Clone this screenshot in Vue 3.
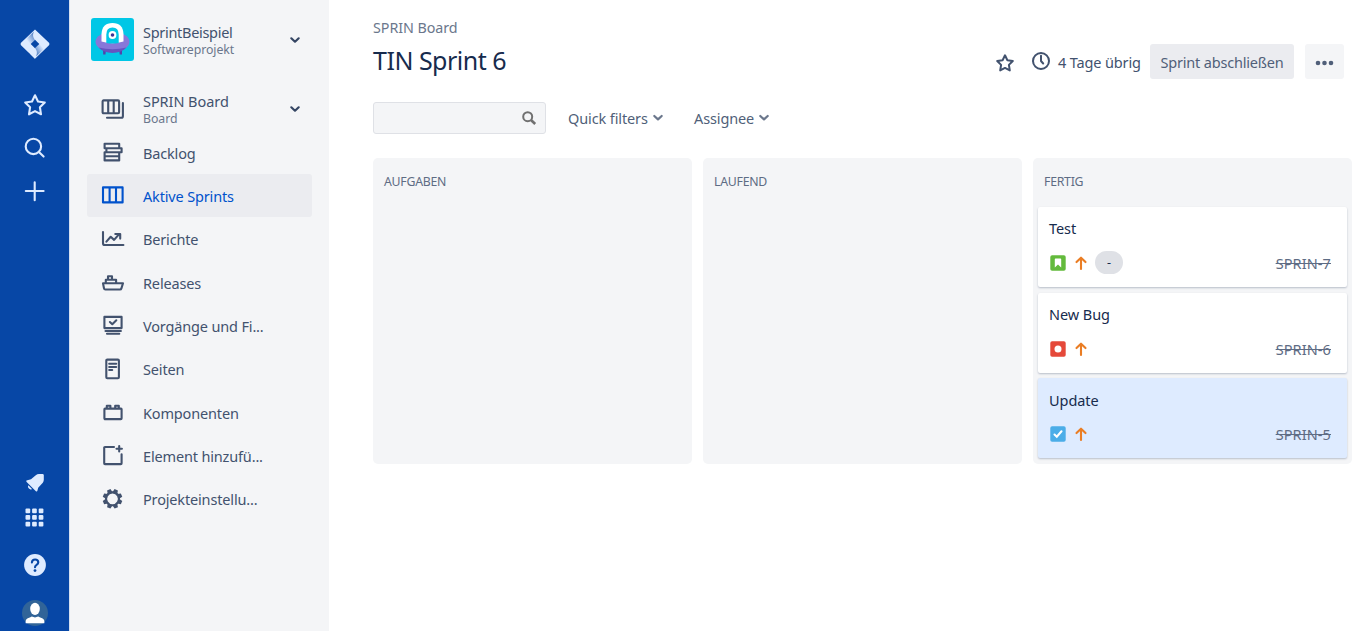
<script setup>
const navItems = [
  { label: 'Backlog', d: 'M4.6 4.8h14.6v4.5H4.6zM6.4 9.3h15.2v4H6.4zM4.6 13.3h14.6v8.1H4.6zM4.6 17.3h14.6' },
  { label: 'Aktive Sprints', active: true, d: 'M3 5.4h19.6v15H3zM9.6 5.4v15M16 5.4v15' },
  { label: 'Berichte', d: 'M3 6v11.2q0 1.8 1.8 1.8H23.4M6.4 15.6l4.3-4.8 3.4 3.1 4.6-5.3M15.3 8h4.9v4.6' },
  { label: 'Releases', d: 'M3 14.2h20l-1.6 5.2q-.3 1.1-1.5 1.1H5.4q-1.2 0-1.4-1.1zM5.8 14v-3.2h10.3V14M8 10.4V7.2h4v3.2' },
  { label: 'Vorgänge und Fi...', d: 'M4.4 4.9h17.2v11.2H4.4zM9.9 10l2.4 2.2 4-3.9M5.5 19h15.4M7 21.8h12.3' },
  { label: 'Seiten', d: 'M7.3 3.6h10.6q1 0 1 1v16.6q0 1-1 1H7.3q-1 0-1-1V4.6q0-1 1-1zM9.2 7.8h7M9.2 11h7M9.2 14h3' },
  { label: 'Komponenten', d: 'M5 9.6h16q.6 0 .6.6v9.1q0 .8-.8.8H5.2q-.8 0-.8-.8v-9.1q0-.6.6-.6zM6.8 9V6.7h3.6V9M15.2 9V6.7h3.6V9' },
  { label: 'Element hinzufü...', d: 'M14 5H5q-.8 0-.8.8v15.5q0 .8.8.8h15.8q.8 0 .8-.8v-9M19.2 4v5.4M16.5 6.7h5.4' },
  { label: 'Projekteinstellu...', gear: true, d: 'M12.5 6.4a6.4 6.4 0 1 0 .01 0z' },
]

const cards = [
  { title: 'Test', key: 'SPRIN-7', type: 'story', estimate: '-' },
  { title: 'New Bug', key: 'SPRIN-6', type: 'bug' },
  { title: 'Update', key: 'SPRIN-5', type: 'task', selected: true },
]

const columns = [
  { name: 'AUFGABEN', cards: [] },
  { name: 'LAUFEND', cards: [] },
  { name: 'FERTIG', cards },
]

const teeth = [22.5, 67.5, 112.5, 157.5, 202.5, 247.5, 292.5, 337.5]
const dots = [0, 1, 2, 3, 4, 5, 6, 7, 8]
</script>

<template>
  <div class="app">
    <nav class="rail">
      <div class="rail-item logo">
        <svg width="30" height="30" viewBox="0 0 30 30">
          <defs>
            <linearGradient id="shade-top" x1="1" y1="0" x2="0" y2="1"><stop offset=".2" stop-color="#0747a6" stop-opacity=".6" /><stop offset=".8" stop-color="#0747a6" stop-opacity="0" /></linearGradient>
            <linearGradient id="shade-bottom" x1="0" y1="1" x2="1" y2="0"><stop offset=".2" stop-color="#0747a6" stop-opacity=".6" /><stop offset=".8" stop-color="#0747a6" stop-opacity="0" /></linearGradient>
          </defs>
          <path d="M15 .5 29 13.8q1 1.2 0 2.4L15 29.7l-4.5-4.5L15 19.3 19.3 15 15 10.7z" fill="#deebff" />
          <path d="M15 .5v10.2L10.7 15l4.3 4.3v10.4L1 16.2q-1-1.2 0-2.4z" fill="#deebff" />
          <path d="M14.8 10.7Q11.8 7 14 2.5L6 10l4.7 5z" fill="url(#shade-top)" />
          <path d="M15.2 19.3q3 3.7.8 8.2l8-7.5-4.7-5z" fill="url(#shade-bottom)" />
        </svg>
      </div>
      <div class="rail-item">
        <svg class="line" width="26" height="26" viewBox="0 0 26 26"><path d="m13 3.3 3 6.2 6.8 1-4.9 4.7 1.1 7.1-6-3.2-6 3.2 1.1-7.1-4.9-4.7 6.8-1z" /></svg>
      </div>
      <div class="rail-item">
        <svg class="line" width="26" height="26" viewBox="0 0 26 26"><circle cx="11.4" cy="11.4" r="7.7" /><path d="m16.9 16.9 4.7 4.7" /></svg>
      </div>
      <div class="rail-item">
        <svg class="line" width="26" height="26" viewBox="0 0 26 26"><path d="M12.7 4.2v18M3.8 13h17.8" /></svg>
      </div>
      <div class="rail-bottom">
        <div class="rail-item short">
          <svg width="26" height="26" viewBox="0 0 26 26" fill="#deebff"><path d="M4.4 11.4q-.5 1.1.5 1.9l9 9q1.2.6 1.5-.6l.8-3 4.6-5q1-1.300 1-3V6.1q-.2-1-1.2-1h-3.600q-1.800 0-3.200 1.200L9 10.300z" /><path d="M6.300 16.300 10 19.900q-1.600 1.200-3.100-.3-1.600-1.600-.6-3.300z" /></svg>
        </div>
        <div class="rail-item short">
          <svg width="19" height="19" viewBox="0 0 19 19" fill="#deebff"><rect v-for="i in dots" :key="i" :x="0.5 + (i % 3) * 6.6" :y="0.5 + Math.floor(i / 3) * 6.6" width="4.7" height="4.7" rx="1" /></svg>
        </div>
        <div class="rail-item help">
          <svg width="22" height="22" viewBox="0 0 22 22"><circle cx="11" cy="11" r="10.9" fill="#deebff" /><path d="M7.900 8.500q.2-3 3.200-3t3.200 2.800q0 1.500-1.700 2.500-1.600.9-1.600 2.400" fill="none" stroke="#0747a6" stroke-width="2.1" stroke-linecap="round" /><circle cx="11" cy="16.6" r="1.4" fill="#0747a6" /></svg>
        </div>
        <div class="rail-item">
          <svg width="26" height="26" viewBox="0 0 26 26"><circle cx="13" cy="13" r="13" fill="#316498" /><ellipse cx="13" cy="8.9" rx="4.8" ry="6.2" fill="#fff" /><path d="M3.600 22.700q-.5-4.300 4.200-5.200l2-.9q3.200 1.600 6.400 0l2 .9q4.700.9 4.200 5.200 0 .6-.6.600H4.200q-.6 0-.6-.600z" fill="#fff" /></svg>
        </div>
      </div>
    </nav>

    <aside class="sidebar">
      <header class="project">
        <svg width="43" height="43" viewBox="0 0 43 43">
          <rect width="43" height="43" rx="3" fill="#00c7e6" />
          <path d="M12 30h3l-.5 6.500h-2.300zM28 30h3v6.500h-2.300z" fill="#5243aa" />
          <ellipse cx="21.5" cy="23.7" rx="17" ry="9.8" fill="#8777d9" />
          <path d="M7.500 29.500q14 3.500 28 0-5 5.400-14 5.400T7.500 29.500z" fill="#6554c0" />
          <path d="M10.500 23.500V16Q11 5 21.500 5T32.500 16v7.500q-11 3.500-22 0z" fill="#fff" />
          <path d="M15.300 25V16.500q0-7 6.200-7t6.200 7V25q-6.200 1.200-12.400 0z" fill="#00c7e6" />
          <circle cx="21.5" cy="17" r="3.9" fill="#fff" /><circle cx="21.5" cy="17" r="1.8" fill="#403294" />
        </svg>
        <div class="stack">
          <span class="name tight">SprintBeispiel</span>
          <span class="sub">Softwareprojekt</span>
        </div>
        <svg class="chevron" width="12" height="8" viewBox="0 0 12 8"><path d="m2.300 2.300 3.700 3.400L9.700 2.300" /></svg>
      </header>

      <div class="nav-item">
        <svg class="nav-icon" width="26" height="26" viewBox="0 0 26 26"><path d="M3.600 4.400h14.500q1 0 1 1v10.800q0 1-1 1H3.600q-1 0-1-1V5.400q0-1 1-1zM8.200 4.400v12.800M13.700 4.400v12.800M22.900 7v13.200q0 1.500-1.500 1.500H7" /></svg>
        <div class="stack board">
          <span class="name">SPRIN Board</span>
          <span class="sub">Board</span>
        </div>
        <svg class="chevron" width="12" height="8" viewBox="0 0 12 8"><path d="m2.300 2.300 3.700 3.400L9.700 2.300" /></svg>
      </div>

      <div v-for="item in navItems" :key="item.label" class="nav-item" :class="{ active: item.active }">
        <svg class="nav-icon" width="26" height="26" viewBox="0 0 26 26">
          <path :d="item.d" />
          <template v-if="item.gear">
            <path v-for="a in teeth" :key="a" class="tooth" d="M10 6.600 10.700 3h3.600l.7 3.600z" :transform="`rotate(${a} 12.5 12.8)`" />
          </template>
        </svg>
        <span class="nav-label">{{ item.label }}</span>
      </div>
    </aside>

    <main class="main">
      <div class="crumb">SPRIN Board</div>
      <div class="title-row">
        <h1>TIN Sprint 6</h1>
        <div class="actions">
          <svg class="dark star" width="20" height="20" viewBox="0 0 20 20"><path d="m10 2.300 2.400 4.900 5.400.8-3.900 3.900.9 5.500-4.800-2.500-4.800 2.500.9-5.500L2.200 8l5.400-.8z" /></svg>
          <svg class="dark clock" width="20" height="20" viewBox="0 0 20 20"><circle cx="10" cy="10" r="8" /><path d="M10 4.800V10l2.200 2.500" /></svg>
          <span class="days">4 Tage übrig</span>
          <button class="complete">Sprint abschließen</button>
          <button class="more"><svg width="20" height="6" viewBox="0 0 20 6" fill="#505f79"><circle cx="3" cy="3" r="2.3" /><circle cx="9.5" cy="3" r="2.3" /><circle cx="16" cy="3" r="2.3" /></svg></button>
        </div>
      </div>

      <div class="filters">
        <div class="search">
          <svg width="16" height="16" viewBox="0 0 16 16" fill="none" stroke="#707070" stroke-width="2"><circle cx="6.7" cy="6.7" r="4.5" /><path d="m10 10 4.200 4" stroke-width="2.6" /></svg>
        </div>
        <div class="filter quick">
          <span>Quick filters</span>
          <svg class="chevron soft" width="12" height="8" viewBox="0 0 12 8"><path d="m2.300 2 3.700 3.400L9.700 2" /></svg>
        </div>
        <div class="filter assignee">
          <span>Assignee</span>
          <svg class="chevron soft" width="12" height="8" viewBox="0 0 12 8"><path d="m2.300 2 3.700 3.400L9.700 2" /></svg>
        </div>
      </div>

      <div class="columns">
        <section v-for="col in columns" :key="col.name" class="column">
          <h2>{{ col.name }}</h2>
          <article v-for="card in col.cards" :key="card.key" class="card" :class="{ selected: card.selected }">
            <div class="card-title">{{ card.title }}</div>
            <div class="meta">
              <svg class="type" width="16" height="16" viewBox="0 0 16 16">
                <template v-if="card.type === 'story'"><rect x=".3" y=".3" width="15.4" height="15.4" rx="1.8" fill="#63ba3c" /><path d="M4.800 4.300q0-.7.7-.7h5q.7 0 .7.700v8.200L8 9.400l-3.200 3.100z" fill="#fff" /></template>
                <template v-else-if="card.type === 'bug'"><rect x=".3" y=".3" width="15.4" height="15.4" rx="1.8" fill="#e5493a" /><circle cx="8" cy="8" r="3.5" fill="#fff" /></template>
                <template v-else><rect x=".3" y=".3" width="15.4" height="15.4" rx="1.8" fill="#4bade8" /><path d="m4.500 8.500 2.300 2.200 4.700-5.400" fill="none" stroke="#fff" stroke-width="2.1" stroke-linecap="round" /></template>
              </svg>
              <svg class="arrow" width="14" height="16" viewBox="0 0 14 16"><path d="M7 14V3.200M2.500 7.100 7 2.700l4.500 4.400" /></svg>
              <span v-if="card.estimate" class="estimate">{{ card.estimate }}</span>
              <span class="key">{{ card.key }}</span>
            </div>
          </article>
        </section>
      </div>
    </main>
  </div>
</template>

<style>
body { overflow: hidden; background: #fff; }
</style>

<style scoped>
.app { display: flex; height: 631px; overflow: hidden; font-family: "Noto Sans", "Open Sans", sans-serif; color: #42526e; font-size: 14.5px; line-height: 22px; white-space: nowrap; letter-spacing: -0.06px; }
.app * { box-sizing: border-box; }
svg { display: block; flex: none; }
.rail { width: 69px; flex: none; background: #0747a6; display: flex; flex-direction: column; padding-top: 22px; }
.rail-item { height: 43.3px; flex: none; display: flex; align-items: center; justify-content: center; }
.logo { height: 43px; margin-bottom: 18px; }
.line { fill: none; stroke: #deebff; stroke-width: 2.1; stroke-linecap: round; stroke-linejoin: round; }
.rail-bottom { margin-top: auto; margin-bottom: -4px; }
.short { height: 35.3px; }
.help { margin: 8px 0 5px; }

.sidebar { width: 260px; flex: none; background: #f4f5f7; padding: 0 17px 0 18px; box-shadow: inset 1px 0 #d5e0f0; }
.project { height: 87px; display: flex; padding: 18px 11px 0 4px; }
.stack { display: flex; flex-direction: column; flex: 1; }
.project .stack { margin: 4px 0 0 9px; }
.project .chevron { margin-top: 18px; }
.name { line-height: 21px; }
.tight { letter-spacing: -0.3px; }
.sub { font-size: 12.3px; line-height: 13px; color: #6b778c; }
.chevron { fill: none; stroke: #344563; stroke-width: 2.2; stroke-linecap: round; stroke-linejoin: round; }
.soft { stroke: #6b778c; }
.nav-item { height: 43.35px; display: flex; align-items: center; padding: 0 11px 0 13px; border-radius: 3px; }
.nav-icon { fill: none; stroke: #42526e; stroke-width: 2.1; stroke-linecap: round; stroke-linejoin: round; }
.tooth { fill: #42526e; stroke: none; }
.nav-label { margin: 1px 0 0 17px; letter-spacing: -0.16px; }
.board { margin: -2px 0 0 17px; }
.nav-item .chevron { margin-top: 1px; }
.active { background: #ebecf0; color: #0052cc; }
.active .nav-icon { stroke: #0052cc; }

.main { flex: 1; min-width: 0; padding: 18px 13px 0 44px; }
.crumb { height: 20px; line-height: 20px; font-size: 14.3px; color: #6b778c; }
.title-row { display: flex; justify-content: space-between; height: 64px; }
h1 { margin: 4px 0 0; font-weight: 400; font-size: 25px; line-height: 36px; color: #172b4d; letter-spacing: -0.5px; }
.actions { display: flex; align-items: center; height: 36px; margin: 5.5px 8px 0 0; }
.dark { fill: none; stroke: #42526e; stroke-width: 2; stroke-linecap: round; stroke-linejoin: round; }
.star { margin: 2px 16px 0 0; }
.clock { margin: -1px 7px 0 0; }
.days { width: 84px; margin: 0 8px 0 0; letter-spacing: -0.14px; }
button { border: 0; padding: 0; height: 35px; border-radius: 3px; font: inherit; display: flex; align-items: center; justify-content: center; }
.complete { width: 144px; background: #ebecf0; color: #505f79; margin-right: 11px; letter-spacing: -0.18px; }
.more { width: 39px; background: #f4f5f7; padding-top: 2px; }

.filters { display: flex; align-items: center; height: 32px; color: #505f79; letter-spacing: -0.12px; }
.search { width: 173px; height: 32px; border: 1px solid #dfe1e6; border-radius: 3px; background: #f4f5f7; display: flex; align-items: center; justify-content: flex-end; padding-right: 8px; margin-right: 22px; }
.filter { display: flex; align-items: center; justify-content: space-between; }
.quick { width: 96px; margin-right: 30px; }
.assignee { width: 76px; }

.columns { display: flex; gap: 11px; margin-top: 24px; height: 305.5px; }
.column { flex: 1; min-width: 0; background: #f4f5f7; border-radius: 5px; padding: 0 5px; }
h2 { margin: 0; padding: 15px 6px 0; height: 49px; font-size: 12.3px; line-height: 18px; font-weight: 400; color: #5e6c84; letter-spacing: -0.25px; }
.card { height: 80.3px; margin-bottom: 5.3px; background: #fff; border-radius: 2px; box-shadow: 0 1px 2px rgba(9, 30, 66, .25); padding: 10.4px 16px 0 11px; }
.selected { background: #deebff; }
.card-title { color: #172b4d; }
.meta { display: flex; align-items: center; height: 24px; margin-top: 11.6px; }
.type { margin-left: 1px; }
.arrow { margin-left: 8px; fill: none; stroke: #ea7d24; stroke-width: 2.1; stroke-linecap: round; stroke-linejoin: round; }
.estimate { margin-left: 7px; width: 28px; height: 23px; border-radius: 12px; background: #dfe1e6; color: #172b4d; font-size: 12.5px; line-height: 24px; text-align: center; }
.key { margin-left: auto; color: #5e6c84; text-decoration: line-through; letter-spacing: 0.1px; }
</style>
